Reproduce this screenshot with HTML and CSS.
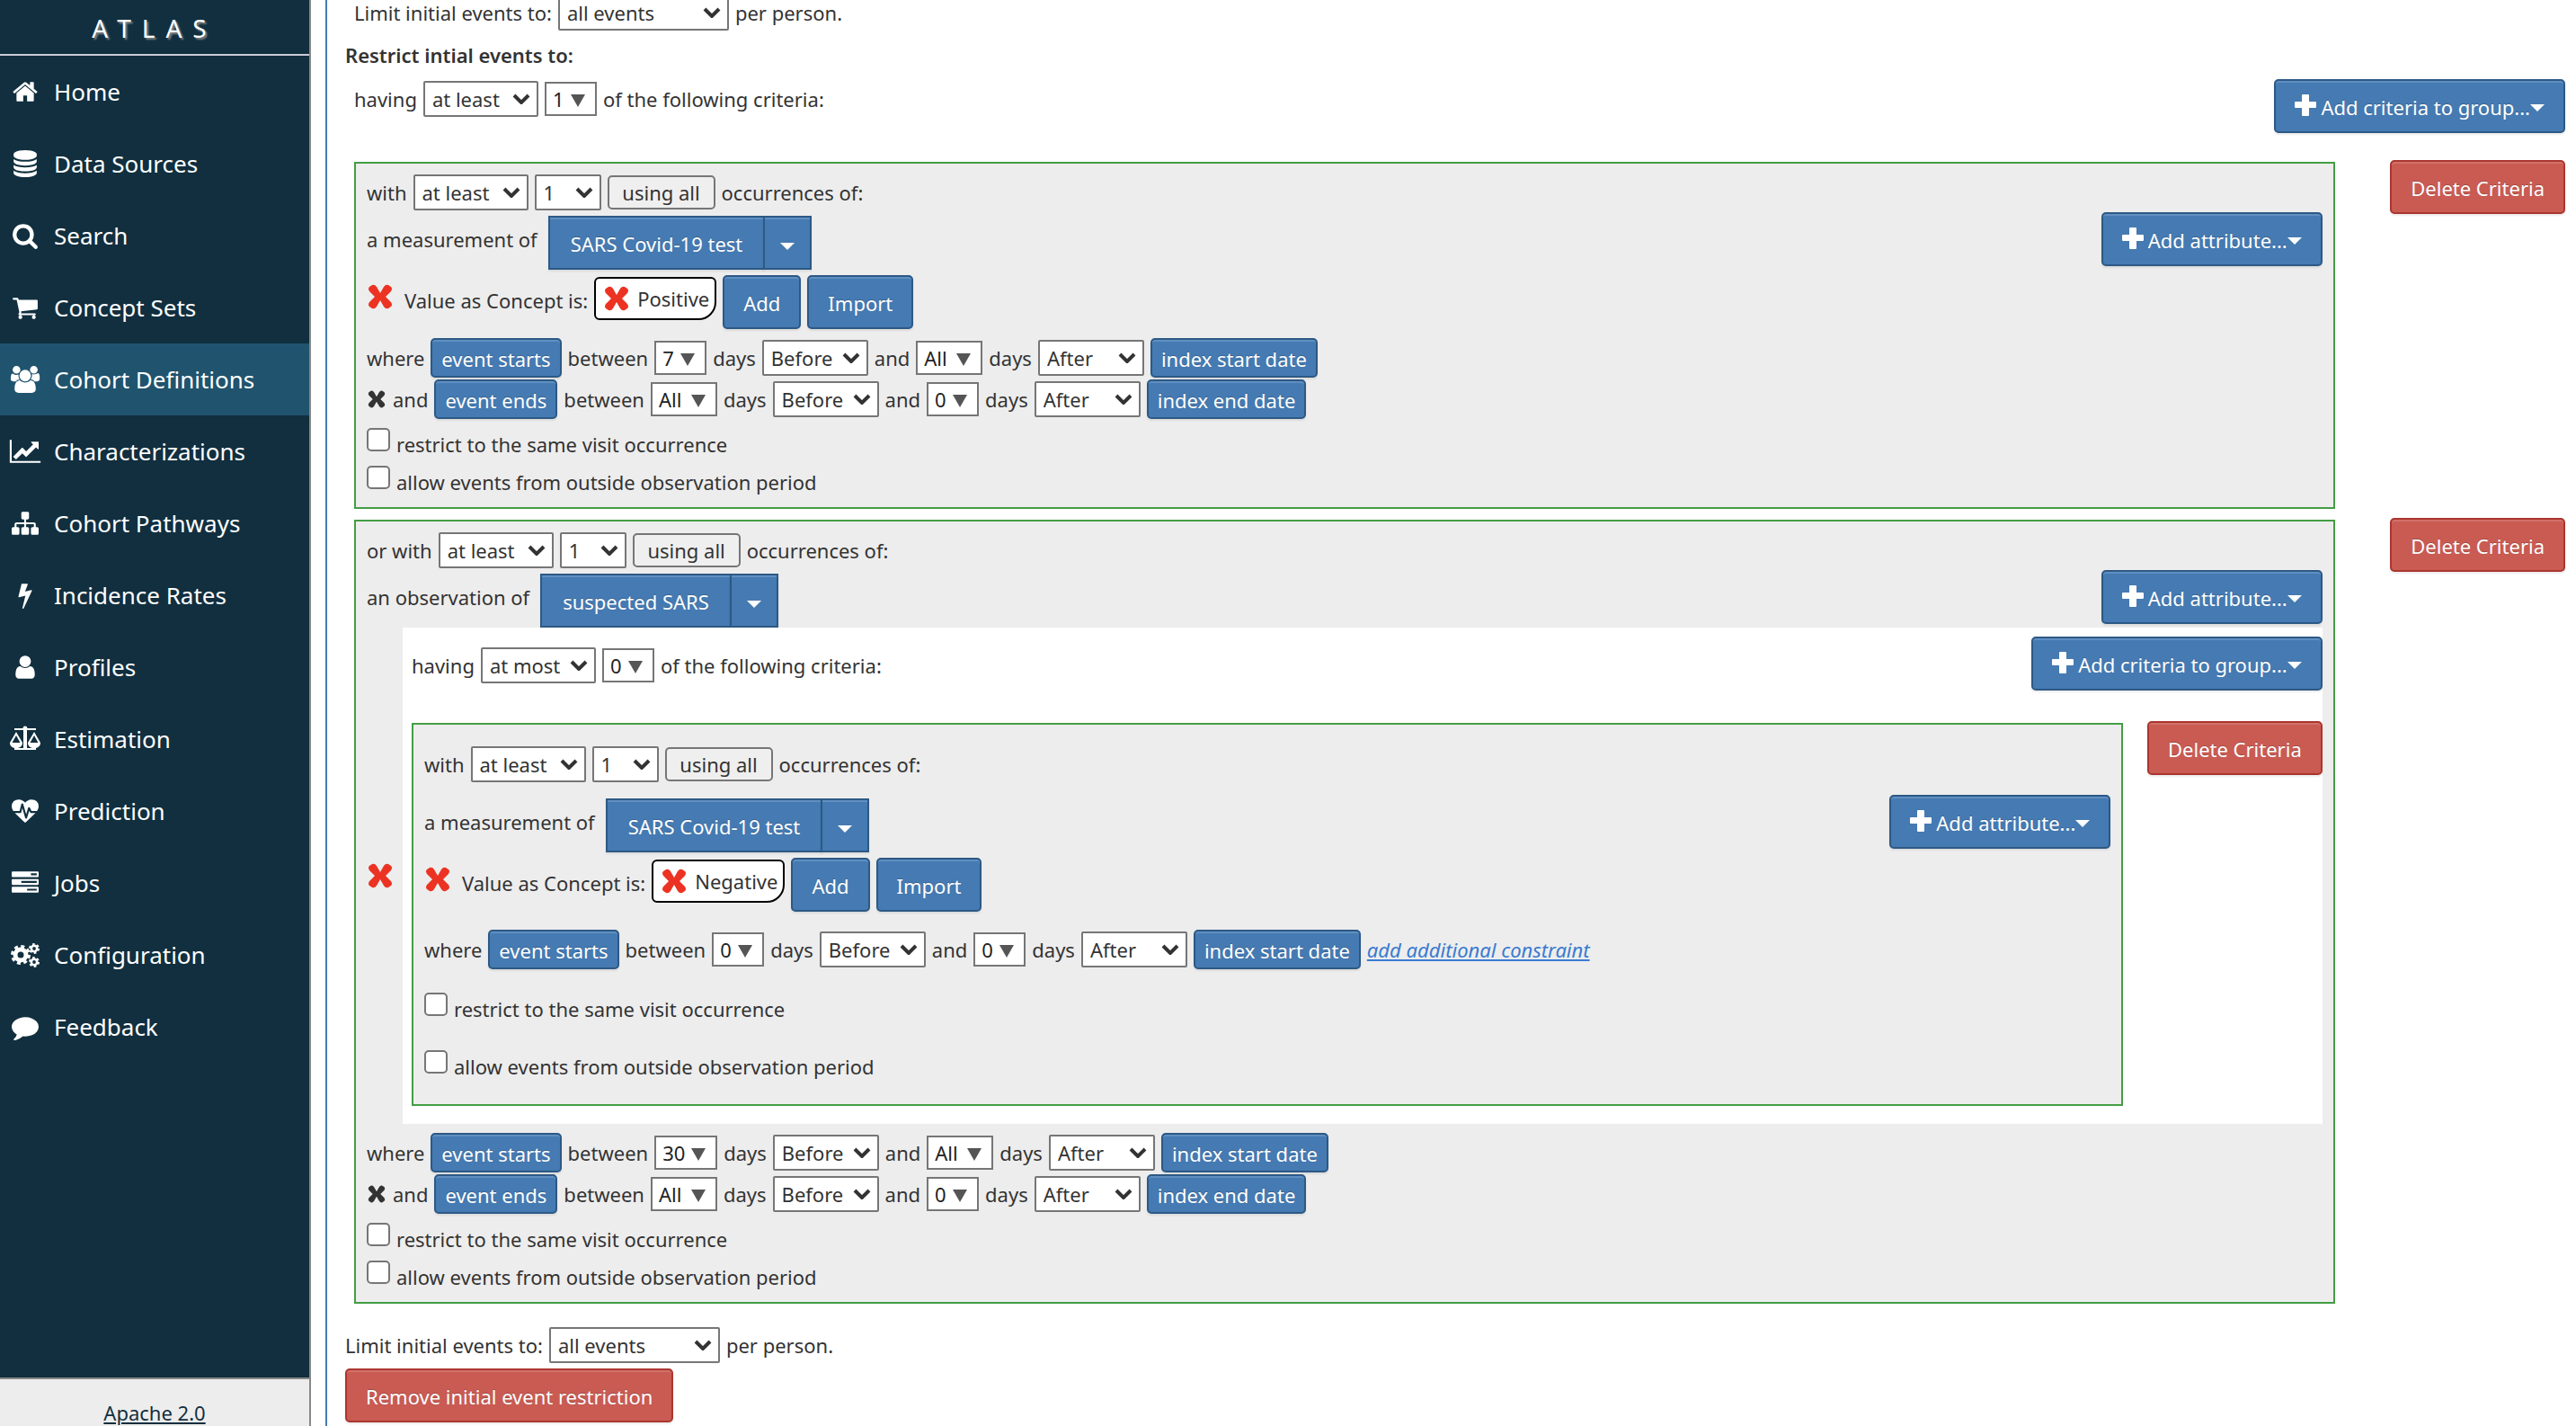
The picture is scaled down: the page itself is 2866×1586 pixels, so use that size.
FILE: index.html
```html
<!DOCTYPE html>
<html lang="en">
<head>
<meta charset="utf-8">
<title>ATLAS: Cohort Definitions</title>
<link rel="stylesheet" href="styles.css">
</head>
<body>
<svg class="sprite" aria-hidden="true">
  <symbol id="i-home" viewBox="0 0 1792 1792"><path d="M1472 992v480q0 26-19 45t-45 19h-384v-384h-256v384h-384q-26 0-45-19t-19-45v-480q0-1 .5-3t.5-3l575-474 575 474q1 2 1 6zm223-69l-62 74q-8 9-21 11h-3q-13 0-21-7l-692-577-692 577q-12 8-24 7-13-2-21-11l-62-74q-8-10-7-23.5t11-21.5l719-599q32-26 76-26t76 26l244 204v-195q0-14 9-23t23-9h192q14 0 23 9t9 23v408l219 182q10 8 11 21.5t-7 23.5z"/></symbol>
  <symbol id="i-database" viewBox="0 0 1792 1792"><path d="M896 768q237 0 443-43t325-127v170q0 69-103 128t-280 93.5-385 34.5-385-34.5-280-93.5-103-128v-170q119 84 325 127t443 43zm0 768q237 0 443-43t325-127v170q0 69-103 128t-280 93.5-385 34.5-385-34.5-280-93.5-103-128v-170q119 84 325 127t443 43zm0-384q237 0 443-43t325-127v170q0 69-103 128t-280 93.5-385 34.5-385-34.5-280-93.5-103-128v-170q119 84 325 127t443 43zm0-1152q208 0 385 34.5t280 93.5 103 128v128q0 69-103 128t-280 93.5-385 34.5-385-34.5-280-93.5-103-128v-128q0-69 103-128t280-93.5 385-34.5z"/></symbol>
  <symbol id="i-search" viewBox="0 0 1792 1792"><path d="M1216 832q0-185-131.5-316.5t-316.5-131.5-316.5 131.5-131.5 316.5 131.5 316.5 316.5 131.5 316.5-131.5 131.5-316.5zm512 832q0 52-38 90t-90 38q-54 0-90-38l-343-342q-179 124-399 124-143 0-273.5-55.5t-225-150-150-225-55.5-273.5 55.5-273.5 150-225 225-150 273.5-55.5 273.5 55.5 225 150 150 225 55.5 273.5q0 220-124 399l343 343q37 37 37 90z"/></symbol>
  <symbol id="i-cart" viewBox="0 0 1792 1792"><path d="M704 1536q0 52-38 90t-90 38-90-38-38-90 38-90 90-38 90 38 38 90zm896 0q0 52-38 90t-90 38-90-38-38-90 38-90 90-38 90 38 38 90zm128-1088v512q0 24-16.5 42.5t-40.5 21.5l-1044 122q13 60 13 70 0 16-24 64h920q26 0 45 19t19 45-19 45-45 19h-1024q-26 0-45-19t-19-45q0-11 8-31.5t16-36 21.5-40 15.5-29.5l-177-823h-204q-26 0-45-19t-19-45 19-45 45-19h256q16 0 28.5 6.5t19.5 15.5 13 24.5 8 26 5.5 29.5 4.5 26h1201q26 0 45 19t19 45z"/></symbol>
  <symbol id="i-users" viewBox="-64 0 1920 1792"><path d="M529 896q-162 5-265 128h-134q-82 0-138-40.5t-56-118.5q0-353 124-353 6 0 43.5 21t97.5 42.5 119 21.5q67 0 133-23-5 37-5 66 0 159 90 287zm1071 637q0 120-73 189.5t-194 69.5h-874q-121 0-194-69.5t-73-189.5q0-53 3.5-103.5t14-109 26.5-108.5 43-97.5 62-81 85.5-53.5 111.5-20q10 0 43 21.5t73 48 107 48 135 21.5 135-21.5 107-48 73-48 43-21.5q61 0 111.5 20t85.5 53.5 62 81 43 97.5 26.5 108.5 14 109 3.5 103.5zm-1024-1277q0 106-75 181t-181 75-181-75-75-181 75-181 181-75 181 75 75 181zm704 384q0 159-112.5 271.5t-271.5 112.5-271.5-112.5-112.5-271.5 112.5-271.5 271.5-112.5 271.5 112.5 112.5 271.5zm576 225q0 78-56 118.5t-138 40.5h-134q-103-123-265-128 90-128 90-287 0-29-5-66 66 23 133 23 59 0 119-21.5t97.5-42.5 43.5-21q124 0 124 353zm-128-609q0 106-75 181t-181 75-181-75-75-181 75-181 181-75 181 75 75 181z"/></symbol>
  <symbol id="i-chart" viewBox="0 0 2048 1792"><path d="M2048 1536v128h-2048v-1536h128v1408h1920zm-128-1248v435q0 21-19.5 29.5t-35.5-7.5l-121-121-633 633q-10 10-23 10t-23-10l-233-233-416 416-192-192 585-585q10-10 23-10t23 10l233 233 464-464-121-121q-16-16-7.5-35.5t29.5-19.5h435q14 0 23 9t9 23z"/></symbol>
  <symbol id="i-sitemap" viewBox="0 0 1792 1792"><path d="M1792 1248v320q0 40-28 68t-68 28h-320q-40 0-68-28t-28-68v-320q0-40 28-68t68-28h96v-192h-512v192h96q40 0 68 28t28 68v320q0 40-28 68t-68 28h-320q-40 0-68-28t-28-68v-320q0-40 28-68t68-28h96v-192h-512v192h96q40 0 68 28t28 68v320q0 40-28 68t-68 28h-320q-40 0-68-28t-28-68v-320q0-40 28-68t68-28h96v-192q0-52 38-90t90-38h512v-192h-96q-40 0-68-28t-28-68v-320q0-40 28-68t68-28h320q40 0 68 28t28 68v320q0 40-28 68t-68 28h-96v192h512q52 0 90 38t38 90v192h96q40 0 68 28t28 68z"/></symbol>
  <symbol id="i-bolt" viewBox="0 0 1792 1792"><path d="M1333 566q18 20 7 44l-540 1157q-13 25-42 25-4 0-14-2-17-5-25.5-19t-4.5-30l197-808-406 101q-4 1-12 1-18 0-31-11-18-15-13-39l201-825q4-14 16-23t28-9h328q19 0 32 12.5t13 29.5q0 8-5 18l-171 463 396-98q8-2 12-2 19 0 34 15z"/></symbol>
  <symbol id="i-user" viewBox="0 0 1792 1792"><path d="M1536 1399q0 109-62.5 187t-150.5 78h-854q-88 0-150.5-78t-62.5-187q0-85 8.5-160.5t31.5-152 58.5-131 94-89 134.5-34.5q131 128 313 128t313-128q76 0 134.5 34.5t94 89 58.5 131 31.5 152 8.5 160.5zm-256-887q0 159-112.5 271.5t-271.5 112.5-271.5-112.5-112.5-271.5 112.5-271.5 271.5-112.5 271.5 112.5 112.5 271.5z"/></symbol>
  <symbol id="i-scale" viewBox="0 0 36 28"><path d="M6 2h9.500a2.500 2.500 0 0 1 5 0H30v2H20v20h10v2H6v-2h10V4H6zM8 6l7 12c0 4-3 6-7 6s-7-2-7-6zm0 4L3.500 18h9zM28 6l7 12c0 4-3 6-7 6s-7-2-7-6zm0 4l-4.500 8h9z" fill-rule="evenodd"/></symbol>
  <symbol id="i-heart" viewBox="0 0 1792 1792"><path d="M1280 1024h305q-5 6-10 10.500t-9 7.500l-3 4-623 600q-18 18-44 18t-44-18l-624-602q-5-2-21-20h369q22 0 39.500-13.500t22.500-34.500l70-281 190 667q6 20 23 33t39 13q21 0 38-13t23-33l146-485 56 112q18 35 57 35zm512-428q0 145-103 300h-369l-111-221q-8-17-25.500-27t-36.500-8q-45 5-56 46l-129 430-196-686q-6-20-23.500-33t-39.500-13-39 13.500-22 34.500l-116 464h-423q-103-155-103-300 0-220 127-344t351-124q62 0 126.500 21.500t120 58 95.500 68.500 76 68q36-36 76-68t95.500-68.500 120-58 126.500-21.500q224 0 351 124t127 344z"/></symbol>
  <symbol id="i-tasks" viewBox="0 0 1792 1792"><path d="M1024 1408h640v-128h-640v128zm-384-512h1024v-128h-1024v128zm640-512h384v-128h-384v128zm512 832v256q0 26-19 45t-45 19h-1664q-26 0-45-19t-19-45v-256q0-26 19-45t45-19h1664q26 0 45 19t19 45zm0-512v256q0 26-19 45t-45 19h-1664q-26 0-45-19t-19-45v-256q0-26 19-45t45-19h1664q26 0 45 19t19 45zm0-512v256q0 26-19 45t-45 19h-1664q-26 0-45-19t-19-45v-256q0-26 19-45t45-19h1664q26 0 45 19t19 45z"/></symbol>
  <symbol id="i-cogs" viewBox="0 0 32 30"><g fill="none" stroke="#fff"><circle cx="11" cy="15" r="6" stroke-width="5"/><circle cx="11" cy="15" r="9.500" stroke-width="3" stroke-dasharray="4 3.460"/><circle cx="26" cy="8" r="3.200" stroke-width="2.600"/><circle cx="26" cy="8" r="5" stroke-width="2" stroke-dasharray="2.600 2.636"/><circle cx="26" cy="23" r="3.200" stroke-width="2.600"/><circle cx="26" cy="23" r="5" stroke-width="2" stroke-dasharray="2.600 2.636"/></g></symbol>
  <symbol id="i-comment" viewBox="0 0 1792 1792"><path d="M1792 896q0 174-120 321.500t-326 233-450 85.500q-70 0-145-8-198 175-460 242-49 14-114 22-17 2-30.500-9t-17.500-29v-1q-3-4-.5-12t2-10 4.500-9.500l6-9 7-8.500 8-9q7-8 31-34.500t34.500-38 31-39.500 32.500-51 27-59 26-76q-157-89-247.500-220t-90.500-281q0-130 71-248.500t191-204.500 286-136.500 348-50.500q244 0 450 85.500t326 233 120 321.500z"/></symbol>
  <symbol id="i-times" viewBox="302 366 1188 1188"><path d="M1490 1322q0 40-28 68l-136 136q-28 28-68 28t-68-28l-294-294-294 294q-28 28-68 28t-68-28l-136-136q-28-28-28-68t28-68l294-294-294-294q-28-28-28-68t28-68l136-136q28-28 68-28t68 28l294 294 294-294q28-28 68-28t68 28l136 136q28 28 28 68t-28 68l-294 294 294 294q28 28 28 68z"/></symbol>
  <symbol id="i-plus" viewBox="0 0 24 24"><path d="M9 0h6q1 0 1 1v7h7q1 0 1 1v5q0 1-1 1h-7v8q0 1-1 1H9q-1 0-1-1v-8H1q-1 0-1-1V9q0-1 1-1h7V1q0-1 1-1z"/></symbol>
  <symbol id="i-cross" viewBox="0 0 28 28"><path d="M5 1Q8 0 10 3l4 7 4-7q2-3 5-2l3 2q2 2 0 5l-6 6 6 6q2 3 0 5l-3 2q-3 1-5-2l-4-7-4 7q-2 3-5 2l-3-2q-2-2 0-5l6-6-6-6q-2-3 0-5z"/></symbol>
  <symbol id="i-chevron" viewBox="0 0 20 12"><path d="M2 2l8 8 8-8" fill="none" stroke="#333" stroke-width="4"/></symbol>
  <symbol id="i-down" viewBox="0 0 16 14"><path d="M0 0h16L8 14z"/></symbol>
  <symbol id="i-caret" viewBox="0 0 16 8"><path d="M0 0h16L8 8z"/></symbol>
</svg>

<div class="app">
  <aside class="sidebar">
    <div class="brand">ATLAS</div>
    <nav class="menu">
      <a href="#home"><svg><use href="#i-home"/></svg>Home</a>
      <a href="#datasources"><svg><use href="#i-database"/></svg>Data Sources</a>
      <a href="#search"><svg><use href="#i-search"/></svg>Search</a>
      <a href="#conceptsets"><svg><use href="#i-cart"/></svg>Concept Sets</a>
      <a href="#cohortdefinitions" class="active" aria-current="page"><svg><use href="#i-users"/></svg>Cohort Definitions</a>
      <a href="#characterizations"><svg><use href="#i-chart"/></svg>Characterizations</a>
      <a href="#pathways"><svg><use href="#i-sitemap"/></svg>Cohort Pathways</a>
      <a href="#iranalysis"><svg><use href="#i-bolt"/></svg>Incidence Rates</a>
      <a href="#profiles"><svg><use href="#i-user"/></svg>Profiles</a>
      <a href="#estimation"><svg><use href="#i-scale"/></svg>Estimation</a>
      <a href="#prediction"><svg><use href="#i-heart"/></svg>Prediction</a>
      <a href="#jobs"><svg><use href="#i-tasks"/></svg>Jobs</a>
      <a href="#configure"><svg><use href="#i-cogs"/></svg>Configuration</a>
      <a href="#feedback"><svg><use href="#i-comment"/></svg>Feedback</a>
    </nav>
    <footer class="license"><a href="#license">Apache 2.0</a></footer>
  </aside>

  <main class="content">
    <div class="editor">
      <div class="line indent">
        <span>Limit initial events to:</span>
        <span class="select wide"><select aria-label="Limit initial events"><option>all events</option></select><svg><use href="#i-chevron"/></svg></span>
        <span>per person.</span>
      </div>
      <h2>Restrict intial events to:</h2>

      <section class="group indent">
        <div class="group-head">
          <div class="line">
            <span>having</span>
            <span class="select mid"><select aria-label="Group type"><option>at least</option></select><svg><use href="#i-chevron"/></svg></span>
            <button class="num">1<svg><use href="#i-down"/></svg></button>
            <span>of the following criteria:</span>
          </div>
          <button class="btn"><svg class="plus"><use href="#i-plus"/></svg>Add criteria to group...<svg class="caret"><use href="#i-caret"/></svg></button>
        </div>

        <div class="criteria-row">
          <div class="criteria">
            <div class="line">
              <span>with</span>
              <span class="select mid"><select aria-label="Occurrence type"><option>at least</option></select><svg><use href="#i-chevron"/></svg></span>
              <span class="select count"><select aria-label="Occurrence count"><option>1</option></select><svg><use href="#i-chevron"/></svg></span>
              <button class="plain">using all</button>
              <span>occurrences of:</span>
            </div>
            <div class="concept">
              <span class="concept-label">a measurement of</span>
              <span class="split"><button class="btn">SARS Covid-19 test</button><button class="btn toggle" aria-label="Concept set options"><svg class="caret"><use href="#i-caret"/></svg></button></span>
              <button class="btn attribute"><svg class="plus"><use href="#i-plus"/></svg>Add attribute...<svg class="caret"><use href="#i-caret"/></svg></button>
            </div>
            <div class="value">
              <button class="remove" aria-label="Remove attribute"><svg><use href="#i-cross"/></svg></button>
              <span class="value-label">Value as Concept is:</span>
              <span class="pill"><button class="remove" aria-label="Remove concept"><svg><use href="#i-cross"/></svg></button>Positive</span>
              <button class="btn">Add</button>
              <button class="btn">Import</button>
            </div>
            <div class="windows">
              <div class="line">
                <span>where</span><button class="btn small">event starts</button><span>between</span>
                <button class="num">7<svg><use href="#i-down"/></svg></button><span>days</span>
                <span class="select side"><select aria-label="Start direction"><option>Before</option></select><svg><use href="#i-chevron"/></svg></span><span>and</span>
                <button class="num all">All<svg><use href="#i-down"/></svg></button><span>days</span>
                <span class="select side"><select aria-label="End direction"><option>After</option></select><svg><use href="#i-chevron"/></svg></span>
                <button class="btn small">index start date</button>
              </div>
              <div class="line">
                <button class="drop" aria-label="Remove constraint"><svg><use href="#i-cross"/></svg></button><span>and</span><button class="btn small">event ends</button><span>between</span>
                <button class="num all">All<svg><use href="#i-down"/></svg></button><span>days</span>
                <span class="select side"><select aria-label="Start direction"><option>Before</option></select><svg><use href="#i-chevron"/></svg></span><span>and</span>
                <button class="num">0<svg><use href="#i-down"/></svg></button><span>days</span>
                <span class="select side"><select aria-label="End direction"><option>After</option></select><svg><use href="#i-chevron"/></svg></span>
                <button class="btn small">index end date</button>
              </div>
            </div>
            <div class="checks">
              <label><input type="checkbox">restrict to the same visit occurrence</label>
              <label><input type="checkbox">allow events from outside observation period</label>
            </div>
          </div>
          <button class="btn danger">Delete Criteria</button>
        </div>

        <div class="criteria-row">
          <div class="criteria">
            <div class="line">
              <span>or with</span>
              <span class="select mid"><select aria-label="Occurrence type"><option>at least</option></select><svg><use href="#i-chevron"/></svg></span>
              <span class="select count"><select aria-label="Occurrence count"><option>1</option></select><svg><use href="#i-chevron"/></svg></span>
              <button class="plain">using all</button>
              <span>occurrences of:</span>
            </div>
            <div class="concept">
              <span class="concept-label">an observation of</span>
              <span class="split"><button class="btn">suspected SARS</button><button class="btn toggle" aria-label="Concept set options"><svg class="caret"><use href="#i-caret"/></svg></button></span>
              <button class="btn attribute"><svg class="plus"><use href="#i-plus"/></svg>Add attribute...<svg class="caret"><use href="#i-caret"/></svg></button>
            </div>

            <div class="nested">
              <button class="remove" aria-label="Remove nested criteria"><svg><use href="#i-cross"/></svg></button>
              <section class="group">
                <div class="group-head">
                  <div class="line">
                    <span>having</span>
                    <span class="select mid"><select aria-label="Group type"><option>at most</option></select><svg><use href="#i-chevron"/></svg></span>
                    <button class="num">0<svg><use href="#i-down"/></svg></button>
                    <span>of the following criteria:</span>
                  </div>
                  <button class="btn"><svg class="plus"><use href="#i-plus"/></svg>Add criteria to group...<svg class="caret"><use href="#i-caret"/></svg></button>
                </div>
                <div class="criteria-row">
                  <div class="criteria loose">
                    <div class="line">
                      <span>with</span>
                      <span class="select mid"><select aria-label="Occurrence type"><option>at least</option></select><svg><use href="#i-chevron"/></svg></span>
                      <span class="select count"><select aria-label="Occurrence count"><option>1</option></select><svg><use href="#i-chevron"/></svg></span>
                      <button class="plain">using all</button>
                      <span>occurrences of:</span>
                    </div>
                    <div class="concept">
                      <span class="concept-label">a measurement of</span>
                      <span class="split"><button class="btn">SARS Covid-19 test</button><button class="btn toggle" aria-label="Concept set options"><svg class="caret"><use href="#i-caret"/></svg></button></span>
                      <button class="btn attribute"><svg class="plus"><use href="#i-plus"/></svg>Add attribute...<svg class="caret"><use href="#i-caret"/></svg></button>
                    </div>
                    <div class="value">
                      <button class="remove" aria-label="Remove attribute"><svg><use href="#i-cross"/></svg></button>
                      <span class="value-label">Value as Concept is:</span>
                      <span class="pill"><button class="remove" aria-label="Remove concept"><svg><use href="#i-cross"/></svg></button>Negative</span>
                      <button class="btn">Add</button>
                      <button class="btn">Import</button>
                    </div>
                    <div class="windows">
                      <div class="line">
                        <span>where</span><button class="btn small">event starts</button><span>between</span>
                        <button class="num">0<svg><use href="#i-down"/></svg></button><span>days</span>
                        <span class="select side"><select aria-label="Start direction"><option>Before</option></select><svg><use href="#i-chevron"/></svg></span><span>and</span>
                        <button class="num">0<svg><use href="#i-down"/></svg></button><span>days</span>
                        <span class="select side"><select aria-label="End direction"><option>After</option></select><svg><use href="#i-chevron"/></svg></span>
                        <button class="btn small">index start date</button>
                        <a href="#constraint" class="constraint">add additional constraint</a>
                      </div>
                    </div>
                    <div class="checks">
                      <label><input type="checkbox">restrict to the same visit occurrence</label>
                      <label><input type="checkbox">allow events from outside observation period</label>
                    </div>
                  </div>
                  <button class="btn danger">Delete Criteria</button>
                </div>
              </section>
            </div>

            <div class="windows">
              <div class="line">
                <span>where</span><button class="btn small">event starts</button><span>between</span>
                <button class="num two">30<svg><use href="#i-down"/></svg></button><span>days</span>
                <span class="select side"><select aria-label="Start direction"><option>Before</option></select><svg><use href="#i-chevron"/></svg></span><span>and</span>
                <button class="num all">All<svg><use href="#i-down"/></svg></button><span>days</span>
                <span class="select side"><select aria-label="End direction"><option>After</option></select><svg><use href="#i-chevron"/></svg></span>
                <button class="btn small">index start date</button>
              </div>
              <div class="line">
                <button class="drop" aria-label="Remove constraint"><svg><use href="#i-cross"/></svg></button><span>and</span><button class="btn small">event ends</button><span>between</span>
                <button class="num all">All<svg><use href="#i-down"/></svg></button><span>days</span>
                <span class="select side"><select aria-label="Start direction"><option>Before</option></select><svg><use href="#i-chevron"/></svg></span><span>and</span>
                <button class="num">0<svg><use href="#i-down"/></svg></button><span>days</span>
                <span class="select side"><select aria-label="End direction"><option>After</option></select><svg><use href="#i-chevron"/></svg></span>
                <button class="btn small">index end date</button>
              </div>
            </div>
            <div class="checks">
              <label><input type="checkbox">restrict to the same visit occurrence</label>
              <label><input type="checkbox">allow events from outside observation period</label>
            </div>
          </div>
          <button class="btn danger">Delete Criteria</button>
        </div>
      </section>

      <div class="line limit">
        <span>Limit initial events to:</span>
        <span class="select wide"><select aria-label="Limit restricted events"><option>all events</option></select><svg><use href="#i-chevron"/></svg></span>
        <span>per person.</span>
      </div>
      <button class="btn danger">Remove initial event restriction</button>
    </div>
  </main>
</div>
</body>
</html>
```
FILE: styles.css
```css
* { box-sizing: border-box; }

body {
  margin: 0;
  font: 22px/30px "Noto Sans", "Open Sans", sans-serif;
  color: #333;
  background: #fff;
}

button, select, input { font: inherit; color: inherit; margin: 0; }
button { cursor: pointer; }
svg { display: block; flex: none; fill: currentColor; }
.sprite { position: absolute; width: 0; height: 0; }

.app {
  display: grid;
  grid-template-columns: 346px 1fr;
  height: 100vh;
  overflow: hidden;
}

/* Sidebar */
.sidebar {
  display: flex;
  flex-direction: column;
  background: #112f3f;
  border-right: 2px solid #888;
}
.brand {
  height: 62px;
  border-bottom: 2px solid #cccbd8;
  color: #fff;
  font-size: 28px;
  line-height: 62px;
  letter-spacing: 12px;
  text-align: center;
  text-shadow: 2px 2px 2px #888;
}
.menu { flex: 1; }
.menu a {
  display: flex;
  align-items: center;
  gap: 14px;
  height: 80px;
  padding-left: 10px;
  color: #fff;
  font-size: 26px;
  text-decoration: none;
}
.menu a.active { background: #20536e; }
.menu svg { width: 36px; height: 30px; }
.license {
  height: 54px;
  padding-top: 22px;
  border-top: 2px solid #888;
  background: #ededed;
  text-align: center;
}
.license a { color: #112f3f; }

/* Editor */
.content { padding-left: 16px; overflow: hidden; }
.editor {
  min-height: 100%;
  margin-top: -6px;
  padding: 0 12px 4px 20px;
  border-left: 2px solid #457ab2;
}
.indent { margin-left: 10px; }
h2 { margin: 0; font-size: 22px; font-weight: 600; line-height: 54px; }

.line { display: flex; align-items: center; gap: 7px; white-space: nowrap; }
.limit { margin: 26px 0 6px; }

.group-head {
  display: flex;
  justify-content: space-between;
  align-items: flex-start;
  height: 90px;
}
.group-head .line { margin-top: 2px; }

.criteria-row {
  display: grid;
  grid-template-columns: 43fr 5fr;
  align-items: start;
  justify-items: end;
}
.criteria-row + .criteria-row { margin-top: 10px; }
.criteria {
  width: 100%;
  margin-top: 2px;
  padding: 12px 12px 8px;
  border: 2px solid #449d44;
  background: #ededed;
}

.concept {
  display: flex;
  align-items: flex-start;
  height: 64px;
  margin-top: 2px;
}
.concept-label { margin-right: 12px; line-height: 60px; }
.split { display: flex; margin-top: 4px; }
.attribute { margin-left: auto; }

.value { display: flex; align-items: flex-start; margin-top: 6px; }
.value-label { margin: 0 7px 0 12px; line-height: 56px; }
.value .btn { margin-left: 7px; }
.value > .remove { margin-top: 10px; }
.pill {
  display: flex;
  align-items: center;
  gap: 8px;
  height: 48px;
  margin-top: 2px;
  padding: 0 6px 0 8px;
  border: 2px solid #000;
  border-radius: 6px 6px 20px 6px;
  background: #fff;
  line-height: 44px;
}

.windows { display: grid; gap: 2px; margin-top: 10px; }
.checks { display: grid; margin-top: 6px; }
.checks label {
  display: flex;
  gap: 7px;
  height: 42px;
  line-height: 44px;
}
.checks input {
  appearance: none;
  width: 26px;
  height: 26px;
  margin-top: 4px;
  border: 2px solid #767676;
  border-radius: 5px;
  background: #fff;
}

.nested { display: grid; grid-template-columns: 40px 1fr; align-items: center; }
.nested .group { padding: 10px 0 20px 10px; background: #fff; }
.nested .group-head { height: 94px; }
.nested .group-head .line { margin-top: 12px; }

.loose { padding: 24px 12px 22px; }
.loose .concept { margin-top: 14px; }
.loose .windows { margin-top: 20px; }
.loose .checks { margin-top: 22px; gap: 22px; }

/* Controls */
.btn {
  display: inline-flex;
  align-items: center;
  height: 60px;
  padding: 2px 21px 0;
  border: 2px solid #2d5985;
  border-radius: 5px;
  background: #457ab2;
  box-shadow: inset 0 2px #608fc2, 0 2px 2px rgba(0, 0, 0, .08);
  color: #fff;
  text-shadow: 0 -1px rgba(0, 0, 0, .2);
  white-space: nowrap;
}
.btn.small { height: 44px; padding: 2px 10px 0; }
.btn.danger {
  border-color: #ab362f;
  background: #c95b53;
  box-shadow: inset 0 2px #d1716a, 0 2px 2px rgba(0, 0, 0, .08);
}
.split .btn { border-radius: 0; padding: 2px 23px 0; }
.split .toggle { margin-left: -2px; padding: 6px 17px 0; }
.plus { width: 24px; height: 24px; margin: -4px 5px 0 0; }
.caret { width: 16px; height: 8px; margin-top: 2px; }

.plain {
  width: 120px;
  height: 38px;
  padding: 0;
  border: 2px solid #767676;
  border-radius: 5px;
  background: #efefef;
  line-height: 34px;
}

.select { display: grid; align-items: center; height: 40px; }
.select > * { grid-area: 1 / 1; }
.select select {
  appearance: none;
  width: 100%;
  height: 40px;
  padding: 0 0 0 8px;
  border: 2px solid #767676;
  border-radius: 2px;
  background: #fff;
  line-height: 34px;
}
.select svg {
  width: 20px;
  height: 12px;
  margin-right: 9px;
  justify-self: end;
  pointer-events: none;
}
.wide { width: 190px; }
.mid { width: 128px; }
.count { width: 74px; }
.side { width: 118px; }

.num {
  display: flex;
  align-items: center;
  justify-content: space-between;
  width: 58px;
  height: 38px;
  padding: 0 11px 0 7px;
  border: 2px solid #767676;
  background: #fff;
  color: #222;
}
.num svg { width: 16px; height: 14px; margin-top: 3px; fill: #555; }
.num.two { width: 70px; }
.num.all { width: 74px; }

.remove, .drop {
  padding: 0;
  border: 0;
  background: none;
}
.remove { color: #ec3323; }
.remove svg { width: 30px; height: 28px; }
.drop svg { width: 22px; height: 20px; }

.constraint { color: #3a7bd0; font-style: italic; }
```
